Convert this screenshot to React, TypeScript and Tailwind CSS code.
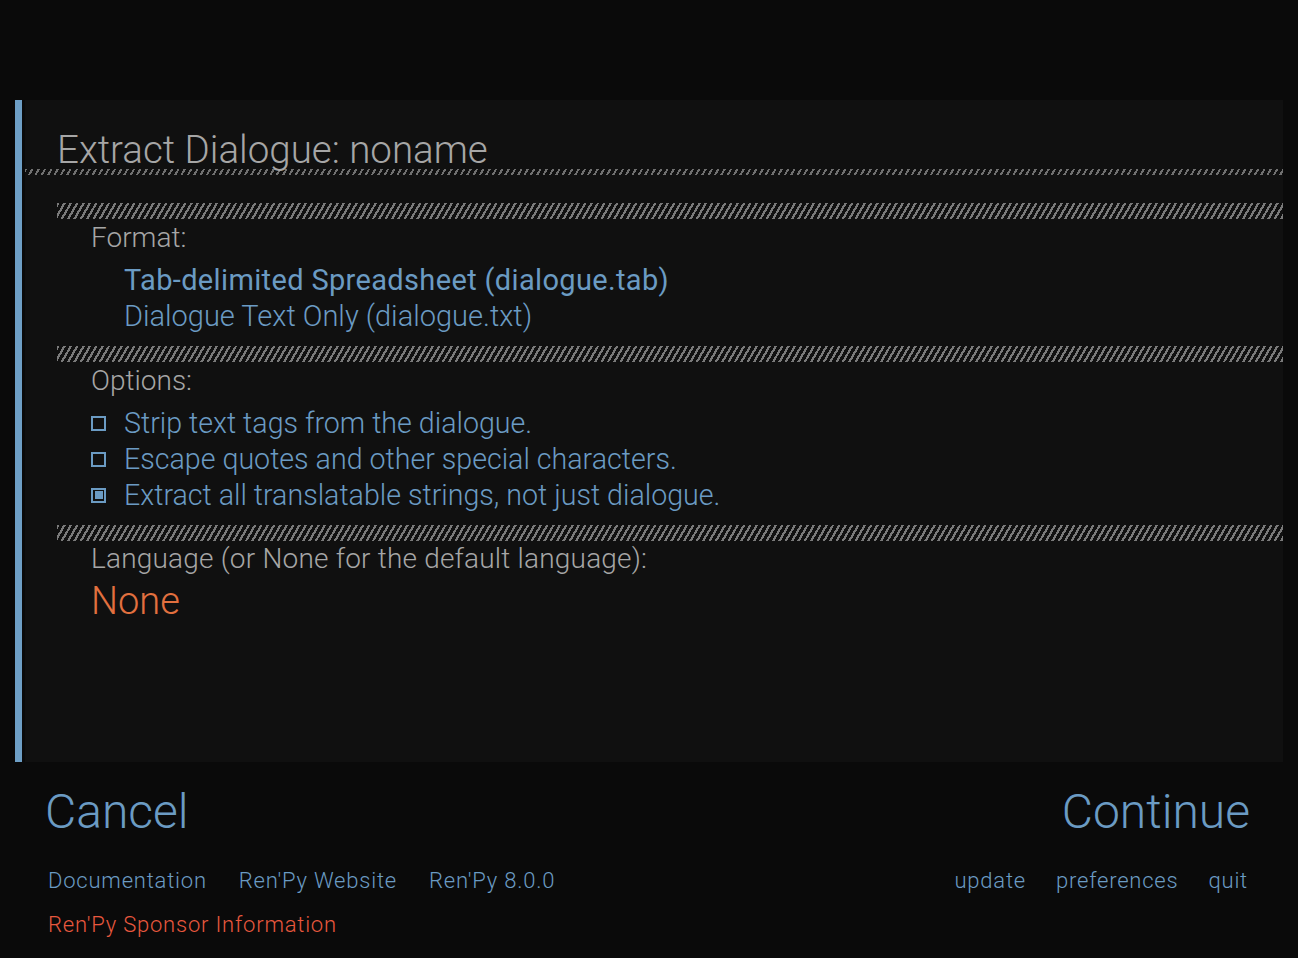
export default function App() {
  const hatchThin =
    'h-[6px] bg-[repeating-linear-gradient(120deg,#707070_0px,#707070_2px,transparent_2px,transparent_5.5px)]'
  const hatchThick =
    'h-[16px] bg-[repeating-linear-gradient(120deg,#7a7a7a_0px,#7a7a7a_2.2px,transparent_2.2px,transparent_5.5px)]'

  return (
    <div className="h-[958px] w-[1298px] overflow-hidden bg-[#0a0a0a] font-['Roboto',sans-serif] font-light">
      {/* dialog panel */}
      <div className="mt-[100px] ml-[15px] mr-[15px] flex h-[662px] gap-[3px]">
        <div className="w-[7px] bg-[#6e9fc6]" />
        <div className="flex-1 bg-[#101010]">
          <div className="pl-[32px] pt-[29px] text-[38.5px] leading-[42px] text-[#a6a6a6]">
            Extract Dialogue: noname
          </div>
          <div className={`${hatchThin} -mt-[2px]`} />

          <div className="ml-[32px] mt-[28px]">
            {/* format */}
            <div className={hatchThick} />
            <div className="ml-[34px] mt-[3px] text-[28px] leading-[32px] text-[#a6a6a6]">Format:</div>
            <div className="ml-[67px] mt-[8px] text-[29px] leading-[36px] text-[#6b9bc3]">
              <div className="font-normal tracking-[0.012em]">Tab-delimited Spreadsheet (dialogue.tab)</div>
              <div>Dialogue Text Only (dialogue.txt)</div>
            </div>

            {/* options */}
            <div className={`${hatchThick} mt-[12px]`} />
            <div className="ml-[34px] mt-[3px] text-[28px] leading-[32px] text-[#a6a6a6]">Options:</div>
            <div className="ml-[34px] mt-[8px] text-[28.6px] leading-[36px] text-[#6b9bc3]">
              {[
                ['Strip text tags from the dialogue.', false],
                ['Escape quotes and other special characters.', false],
                ['Extract all translatable strings, not just dialogue.', true],
              ].map(([label, checked]) => (
                <div key={label as string} className="flex items-center">
                  <span className="flex h-[15px] w-[15px] items-center justify-center border-2 border-[#6b9bc3]">
                    {checked && <span className="h-[8px] w-[8px] bg-[#6b9bc3]" />}
                  </span>
                  <span className="ml-[18px]">{label}</span>
                </div>
              ))}
            </div>

            {/* language */}
            <div className={`${hatchThick} mt-[12px]`} />
            <div className="ml-[34px] mt-[2px] text-[28px] leading-[32px] tracking-[0.007em] text-[#a6a6a6]">
              Language (or None for the default language):
            </div>
            <div className="ml-[34px] mt-[4px] text-[38px] leading-[44px] text-[#e2703f]">None</div>
          </div>
        </div>
      </div>

      {/* bottom buttons */}
      <div className="flex items-center justify-between pl-[45px] pr-[48px] pt-[22px] text-[48px] leading-[56px] text-[#6b9bc3]">
        <span>Cancel</span>
        <span>Continue</span>
      </div>

      {/* footer links */}
      <div className="mt-[27px] flex justify-between pl-[48px] pr-[50px] text-[22px] leading-[28px] tracking-[0.036em] text-[#6b9bc3]">
        <div className="flex gap-[32px]">
          <span>Documentation</span>
          <span>Ren'Py Website</span>
          <span>Ren'Py 8.0.0</span>
        </div>
        <div className="flex gap-[30px]">
          <span>update</span>
          <span>preferences</span>
          <span>quit</span>
        </div>
      </div>
      <div className="mt-[16px] pl-[48px] text-[22px] leading-[28px] tracking-[0.036em] text-[#e8583e]">
        Ren'Py Sponsor Information
      </div>
    </div>
  )
}
